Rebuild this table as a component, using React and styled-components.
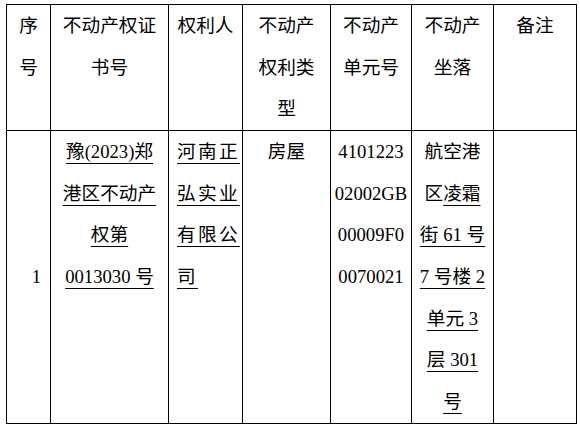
import styled, { createGlobalStyle } from "styled-components";

const GlobalStyle = createGlobalStyle`
  body {
    margin: 0;
    background: #ffffff;
  }
`;

const Page = styled.div`
  padding: 4px 0 0 6px;
`;

const Table = styled.table`
  border-collapse: collapse;
  table-layout: fixed;
  width: 570px;
  font-family: "Liberation Serif", "Noto Sans CJK SC", serif;
  font-size: 18.67px;
  line-height: 41.67px;
  color: #000000;
`;

const HeadCell = styled.th`
  border: 1px solid #000000;
  padding: 0;
  font-weight: normal;
  text-align: center;
  vertical-align: top;
`;

const Cell = styled.td`
  border: 1px solid #000000;
  padding: ${(p) => p.$pad || "0"};
  text-align: ${(p) => p.$align || "center"};
  vertical-align: ${(p) => p.$valign || "top"};
  letter-spacing: ${(p) => p.$spacing || "0"};
  white-space: nowrap;
`;

const Line = styled.span`
  text-decoration: underline;
  text-decoration-thickness: 1px;
  text-underline-offset: 5px;
`;

const widths = [44, 118, 74, 88, 81, 82, 83];

const headers = [
  ["序", "号"],
  ["不动产权证", "书号"],
  ["权利人"],
  ["不动产", "权利类", "型"],
  ["不动产", "单元号"],
  ["不动产", "坐落"],
  ["备注"],
];

const lines = (rows) =>
  rows.map((r, i) => (
    <span key={i}>
      {r}
      {i < rows.length - 1 && <br />}
    </span>
  ));

const App = () => {
  return (
    <Page>
      <GlobalStyle />
      <Table>
        <colgroup>
          {widths.map((w, i) => (
            <col key={i} style={{ width: w }} />
          ))}
        </colgroup>
        <thead>
          <tr>
            {headers.map((h, i) => (
              <HeadCell key={i}>{lines(h)}</HeadCell>
            ))}
          </tr>
        </thead>
        <tbody>
          <tr>
            <Cell $valign="middle" $align="right" $pad="0 9px 0 0">
              1
            </Cell>
            <Cell>
              {lines(["豫(2023)郑", "港区不动产", "权第", "0013030 号"].map((t) => <Line>{t}</Line>))}
            </Cell>
            <Cell $align="left" $pad="0 0 0 8px" $spacing="2.3px">
              {lines(["河南正", "弘实业", "有限公", "司"].map((t) => <Line>{t}</Line>))}
            </Cell>
            <Cell>房屋</Cell>
            <Cell>{lines(["4101223", "02002GB", "00009F0", "0070021"])}</Cell>
            <Cell>
              航空港
              <br />
              区<Line>凌霜</Line>
              <br />
              <Line>街 61 号</Line>
              <br />
              <Line>7 号楼 2</Line>
              <br />
              <Line>单元 3</Line>
              <br />
              <Line>层 301</Line>
              <br />
              <Line>号</Line>
            </Cell>
            <Cell />
          </tr>
        </tbody>
      </Table>
    </Page>
  );
};

export default App;
